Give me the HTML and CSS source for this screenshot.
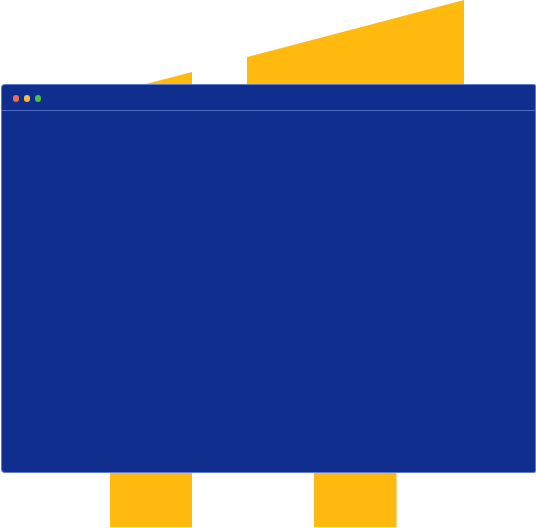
FILE: index.html
```html
<!DOCTYPE html>
<html lang="en">
<head>
<meta charset="utf-8">
<title>Window</title>
<link rel="stylesheet" href="styles.css">
</head>
<body>
<div class="scene">
  <svg class="decor" width="536" height="528" viewBox="0 0 536 528" aria-hidden="true">
    <polygon points="146,84 192,71.9 192,90 146,90" fill="#ffb90f"/>
    <polygon points="247,57 464,0 464,90 247,90" fill="#ffb90f"/>
    <rect x="110" y="460" width="82" height="67" fill="#ffb90f"/>
    <rect x="314" y="460" width="82.5" height="67" fill="#ffb90f"/>
  </svg>
  <div class="window">
    <div class="titlebar">
      <span class="dot dot-red"></span>
      <span class="dot dot-yellow"></span>
      <span class="dot dot-green"></span>
    </div>
    <div class="content"></div>
  </div>
</div>
</body>
</html>
```
FILE: styles.css
```css
html, body {
  margin: 0;
  padding: 0;
  background: #ffffff;
}
.scene {
  position: relative;
  width: 536px;
  height: 528px;
  overflow: hidden;
  padding-top: 84px;
  padding-left: 1px;
  box-sizing: border-box;
}
.decor {
  position: absolute;
  left: 0;
  top: 0;
  z-index: 0;
}
.window {
  position: relative;
  z-index: 1;
  width: 535px;
  height: 389px;
  box-sizing: border-box;
  background: #0f2e8e;
  border: 1px solid rgba(120, 150, 230, 0.75);
  border-radius: 4px 2px 2px 4px;
  display: flex;
  flex-direction: column;
}
.titlebar {
  height: 26px;
  box-sizing: border-box;
  border-bottom: 1px solid rgba(120, 150, 230, 0.6);
  display: flex;
  align-items: center;
  gap: 4.5px;
  padding-left: 10.5px;
  padding-top: 2px;
}
.dot {
  width: 6.5px;
  height: 6.5px;
  border-radius: 50%;
  display: block;
}
.dot-red { background: #ee6a58; }
.dot-yellow { background: #f6bb3e; }
.dot-green { background: #4cc043; }
.content {
  flex: 1;
}
```
